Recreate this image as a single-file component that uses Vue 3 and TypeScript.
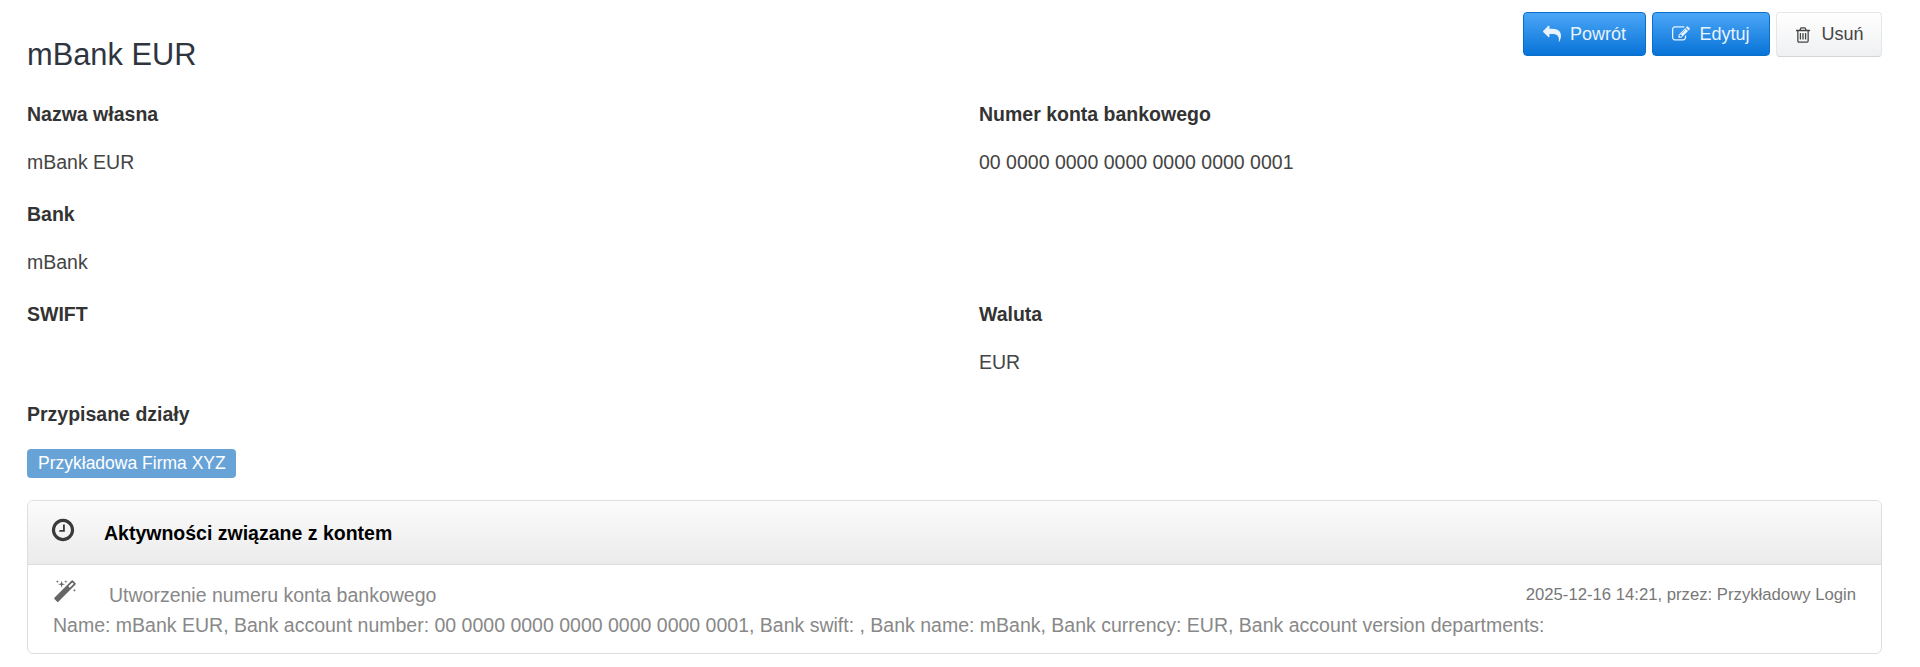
<template>
  <div class="page">
    <header class="top">
      <h1 class="title">{{ account.name }} {{ account.currency }}</h1>
      <div class="actions">
        <button class="btn btn-blue back">
          <svg class="ico" viewBox="0 0 1792 1792"><path :d="icons.reply" /></svg>Powrót
        </button>
        <button class="btn btn-blue edit">
          <svg class="ico" viewBox="0 0 1792 1792"><path :d="icons.edit" /></svg>Edytuj
        </button>
        <button class="btn btn-light del">
          <svg class="ico" viewBox="0 0 1792 1792"><path :d="icons.trash" /></svg>Usuń
        </button>
      </div>
    </header>

    <div class="fields">
      <div v-for="f in fields" :key="f.label" class="field" :class="{ second: f.right, first: !f.right }">
        <div class="label">{{ f.label }}</div>
        <div class="value">{{ f.value }}</div>
      </div>
      <div class="field first">
        <div class="label">Przypisane działy</div>
        <div class="value-badge"><span class="badge">Przykładowa Firma XYZ</span></div>
      </div>
    </div>

    <section class="panel">
      <div class="panel-head">
        <svg class="head-ico" viewBox="0 0 1792 1792"><path :d="icons.clock" /></svg>
        <span class="panel-title">Aktywności związane z kontem</span>
      </div>
      <div class="panel-body">
        <div class="event-top">
          <svg class="event-ico" viewBox="0 0 1792 1792"><path :d="icons.magic" /></svg>
          <span class="event-title">Utworzenie numeru konta bankowego</span>
          <span class="event-meta">2025-12-16 14:21, przez: Przykładowy Login</span>
        </div>
        <div class="event-text">Name: mBank EUR, Bank account number: 00 0000 0000 0000 0000 0000 0001, Bank swift: , Bank name: mBank, Bank currency: EUR, Bank account version departments:</div>
      </div>
    </section>
  </div>
</template>

<script setup lang="ts">
const account = { name: 'mBank', currency: 'EUR' }

const fields = [
  { label: 'Nazwa własna', value: 'mBank EUR', right: false },
  { label: 'Numer konta bankowego', value: '00 0000 0000 0000 0000 0000 0001', right: true },
  { label: 'Bank', value: 'mBank', right: false },
  { label: 'SWIFT', value: '', right: false },
  { label: 'Waluta', value: 'EUR', right: true },
]

const icons = {
  reply: 'M1792 1120q0 166-127 451-3 7-10.5 24t-13.5 30-13 22q-12 17-28 17-15 0-23.5-10t-8.5-25q0-9 2.5-26.5t2.5-23.5q5-68 5-123 0-101-17.5-181t-48.5-138.5-80-101-105.5-69.5-133-42.5-154-21.5-175.5-6h-224v256q0 26-19 45t-45 19-45-19l-512-512q-19-19-19-45t19-45l512-512q19-19 45-19t45 19 19 45v256h224q713 0 875 403 53 134 53 333z',
  edit: 'M888 1184l116-116-152-152-116 116v56h96v96h56zm440-720q-16-16-33 1l-350 350q-17 17-1 33t33-1l350-350q17-17 1-33zm80 594v190q0 119-84.5 203.5t-203.5 84.5h-832q-119 0-203.5-84.5t-84.5-203.5v-832q0-119 84.5-203.5t203.5-84.5h832q63 0 117 25 15 7 18 23 3 17-9 29l-49 49q-14 14-32 8-23-6-45-6h-832q-66 0-113 47t-47 113v832q0 66 47 113t113 47h832q66 0 113-47t47-113v-126q0-13 9-22l64-64q15-15 35-7t20 29zm-96-738l288 288-672 672h-288v-288zm444 132l-92 92-288-288 92-92q28-28 68-28t68 28l152 152q28 28 28 68t-28 68z',
  trash: 'M704 736v576q0 14-9 23t-23 9h-64q-14 0-23-9t-9-23v-576q0-14 9-23t23-9h64q14 0 23 9t9 23zm256 0v576q0 14-9 23t-23 9h-64q-14 0-23-9t-9-23v-576q0-14 9-23t23-9h64q14 0 23 9t9 23zm256 0v576q0 14-9 23t-23 9h-64q-14 0-23-9t-9-23v-576q0-14 9-23t23-9h64q14 0 23 9t9 23zm128 724v-948h-896v948q0 22 7 40.5t14.5 27 10.5 8.5h832q3 0 10.5-8.5t14.5-27 7-40.5zm-672-1076h448l-48-117q-7-9-17-11h-317q-10 2-17 11zm928 32v64q0 14-9 23t-23 9h-96v948q0 83-47 143.5t-113 60.5h-832q-66 0-113-58.5t-47-141.5v-952h-96q-14 0-23-9t-9-23v-64q0-14 9-23t23-9h309l70-167q15-37 54-63t79-26h320q40 0 79 26t54 63l70 167h309q14 0 23 9t9 23z',
  clock: 'M1024 544v448q0 14-9 23t-23 9h-320q-14 0-23-9t-9-23v-64q0-14 9-23t23-9h224v-352q0-14 9-23t23-9h64q14 0 23 9t9 23zm416 352q0-148-73-273t-198-198-273-73-273 73-198 198-73 273 73 273 198 198 273 73 273-73 198-198 73-273zm224 0q0 209-103 385.5t-279.5 279.5-385.5 103-385.5-103-279.5-279.5-103-385.5 103-385.5 279.5-279.5 385.5-103 385.5 103 279.5 279.5 103 385.5z',
  magic: 'M1254 581l293-293-107-107-293 293zm447-293q0 27-18 45l-1286 1286q-18 18-45 18t-45-18l-198-198q-18-18-18-45t18-45l1286-1286q18-18 45-18t45 18l198 198q18 18 18 45zm-1351-190l98 30-98 30-30 98-30-98-98-30 98-30 30-98zm350 162l196 60-196 60-60 196-60-196-196-60 196-60 60-196zm930 478l98 30-98 30-30 98-30-98-98-30 98-30 30-98zm-640-640l98 30-98 30-30 98-30-98-98-30 98-30 30-98z',
}
</script>

<style>
body {
  background: #fff;
}
</style>

<style scoped>
.page {
  padding: 12px 38px 13px 27px;
  font-family: "Liberation Sans", Arial, sans-serif;
  font-size: 19.5px;
  line-height: 28px;
  color: #333;
  box-sizing: border-box;
  height: 667px;
}

.top {
  display: flex;
  justify-content: space-between;
  align-items: flex-start;
}

.title {
  margin: 26px 0 0;
  font-size: 30.8px;
  font-weight: 400;
  line-height: 34px;
  color: #2f353f;
}

.actions {
  display: flex;
  gap: 6px;
}

.btn {
  display: flex;
  align-items: center;
  justify-content: center;
  height: 44px;
  padding: 0;
  border-radius: 4px;
  font-family: inherit;
  font-size: 18px;
  box-sizing: border-box;
}

.back { width: 123px; }
.edit { width: 118px; }
.del { width: 106px; height: 45px; }

.btn-blue {
  border: 1px solid #0a6fc9;
  background: linear-gradient(#4ba6f6, #0873d8);
  color: #e8f3fd;
}

.btn-light {
  border: 1px solid #e6e6e6;
  border-bottom-color: #d4d4d4;
  background: linear-gradient(#fff, #eff0f2);
  color: #444;
}

.ico {
  width: 18px;
  height: 18px;
  margin-right: 9px;
  fill: currentColor;
}

.fields {
  display: grid;
  grid-template-columns: 1fr 1fr;
  column-gap: 49px;
  margin-top: 28px;
}

.field.first { grid-column: 1; }
.field.second { grid-column: 2; }

.field {
  height: 100px;
}

.label {
  font-weight: 700;
  color: #333;
}

.value {
  margin-top: 20px;
  color: #444;
}

.value-badge {
  margin-top: 20px;
  height: 29px;
  line-height: 29px;
}

.badge {
  display: inline-block;
  padding: 0 10px 0 11px;
  height: 29px;
  line-height: 28px;
  border-radius: 4px;
  background: #68a3d8;
  color: #fff;
  font-size: 17.5px;
}

.panel {
  margin-top: 0;
  border: 1px solid #dedede;
  border-radius: 6px;
  overflow: hidden;
}

.panel-head {
  display: flex;
  align-items: center;
  height: 63px;
  border-bottom: 1px solid #ddd;
  background: linear-gradient(#fbfbfb, #ebebeb);
  box-sizing: content-box;
}

.head-ico {
  width: 26px;
  height: 26px;
  margin-left: 22px;
  margin-bottom: 6px;
  fill: #3a3a3a;
}

.panel-title {
  margin-left: 28px;
  font-weight: 700;
  color: #000;
}

.panel-body {
  padding: 15px 25px 14px 25px;
  color: #888;
}

.event-top {
  display: flex;
  align-items: center;
}

.event-ico {
  width: 24px;
  height: 24px;
  margin-bottom: 5px;
  fill: #666;
}

.event-title {
  margin-left: 32px;
}

.event-meta {
  margin-left: auto;
  font-size: 16.7px;
  color: #777;
}

.event-text {
  margin-top: 2px;
}
</style>
